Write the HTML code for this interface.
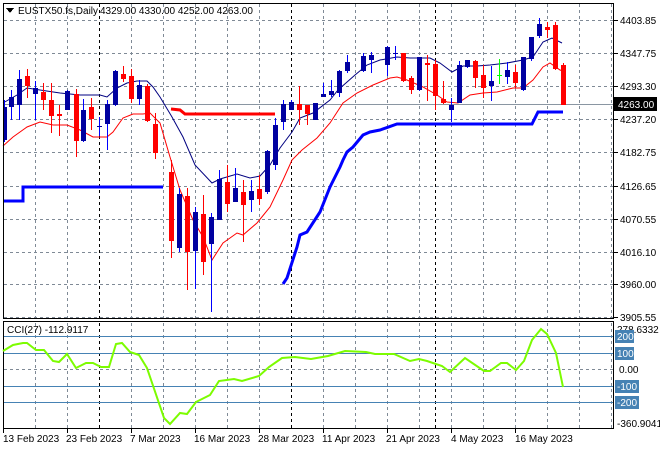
<!DOCTYPE html>
<html><head><meta charset="utf-8"><style>
body{margin:0;background:#fff;width:660px;height:450px;overflow:hidden;font-family:"Liberation Sans",sans-serif;}
svg{position:absolute;left:0;top:0}
text{font-family:"Liberation Sans",sans-serif;font-size:10px;fill:#000}
</style></head><body>
<svg width="660" height="450" viewBox="0 0 660 450" xmlns="http://www.w3.org/2000/svg" shape-rendering="crispEdges">
<rect width="660" height="450" fill="#fff"/>
<g stroke="#7f8a96" stroke-width="1" stroke-dasharray="3,3">
<path d="M4 20.5H613M4 53.5H613M4 86.5H613M4 119.5H613M4 152.5H613M4 186.5H613M4 219.5H613M4 252.5H613M4 284.5H613M4 317.5H613"/>
<path d="M35.5 4V318M67.5 4V318M131.5 4V318M163.5 4V318M195.5 4V318M227.5 4V318M259.5 4V318M323.5 4V318M355.5 4V318M387.5 4V318M419.5 4V318M451.5 4V318M483.5 4V318M515.5 4V318M547.5 4V318M579.5 4V318M611.5 4V318"/>
<path d="M35.5 323V428M67.5 323V428M131.5 323V428M163.5 323V428M195.5 323V428M227.5 323V428M259.5 323V428M323.5 323V428M355.5 323V428M387.5 323V428M419.5 323V428M451.5 323V428M483.5 323V428M515.5 323V428M547.5 323V428M579.5 323V428M611.5 323V428"/>
<path d="M4 369.5H613"/>
</g>
<g stroke="#000" stroke-width="1" stroke-dasharray="3,3">
<path d="M99.5 4V318M291.5 4V318M435.5 4V318M99.5 323V428M291.5 323V428M435.5 323V428"/>
</g>
<path d="M4 104.5H613" stroke="#8a96a2" stroke-width="1"/>
<path d="M171 109L180 110L185 114L275 114" fill="none" stroke="#ff0000" stroke-width="3" shape-rendering="auto"/>
<path d="M3 201H23V187H163" fill="none" stroke="#0000ff" stroke-width="3"/>
<path d="M283 284L287 278L297 247L300 235L307 232L320 212L330 187L340 167L343 160L347 152L353 147L363 135L370 132L380 130L397 124L532 124L538 112L563 112" fill="none" stroke="#0000ff" stroke-width="3" shape-rendering="auto"/>
<path d="M3 103L17 95L27 88L40 90L60 93L80 95L100 95L107 97L117 88L127 83L137 81L147 81L153 87L160 97L172 117L183 137L195 165L212 183L220 179L237 174L250 178L260 176L270 165L280 148L292 132L300 118L313 113L330 100L338 90L355 75L367 65L380 60L397 57L410 58L430 58L440 63L452 72L463 66L477 66L490 65L507 63L523 60L533 57L543 42L552 38L562 43" fill="none" stroke="#000080" stroke-width="1" shape-rendering="auto"/>
<path d="M3 146L13 137L27 127L40 122L53 125L67 125L80 130L93 137L107 137L113 132L123 118L133 114L143 114L150 113L160 123L170 157L180 190L193 220L203 237L212 260L223 243L237 233L243 235L257 223L270 207L283 180L292 160L302 150L317 138L330 123L343 103L357 93L373 85L390 78L397 77L407 80L423 87L437 95L447 102L458 103L470 95L483 93L497 92L513 88L523 88L533 80L543 67L550 63L560 70L563 71" fill="none" stroke="#ff0000" stroke-width="1" shape-rendering="auto"/>
<g stroke-width="1">
<g fill="#0000a0" stroke="#0000ff">
<path d="M4.5 100V142M11.5 90V120M19.5 70V120M35.5 81V120M67.5 90V110M83.5 99V142M99.5 117V136M107.5 100V150M115.5 70V106M139.5 80V105M179.5 188V252M195.5 207V289M211.5 213V312M219.5 170V220M235.5 168V202M251.5 180V212M267.5 150V194M275.5 118V170M283.5 100V130M291.5 100V110M315.5 103V120M323.5 83V97M331.5 80V97M339.5 70V97M347.5 55V73M363.5 53V72M371.5 52V73M387.5 46V76M395.5 46V60M419.5 57V91M451.5 98V122M459.5 61V103M467.5 60V68M491.5 66V101M507.5 62V84M523.5 57V91M531.5 37V61M539.5 18V38"/>
</g>
<g fill="#0000a0" stroke="none">
<rect x="3" y="107" width="4" height="33"/><rect x="9" y="97" width="5" height="10"/><rect x="17" y="79" width="5" height="26"/><rect x="33" y="88" width="5" height="6"/><rect x="65" y="91" width="5" height="19"/><rect x="81" y="110" width="5" height="31"/><rect x="97" y="126" width="5" height="1"/><rect x="105" y="104" width="5" height="20"/><rect x="113" y="71" width="5" height="34"/><rect x="137" y="85" width="5" height="14"/><rect x="177" y="194" width="5" height="54"/><rect x="193" y="212" width="5" height="39"/><rect x="209" y="217" width="5" height="27"/><rect x="217" y="179" width="5" height="41"/><rect x="233" y="188" width="5" height="14"/><rect x="249" y="191" width="5" height="9"/><rect x="265" y="151" width="5" height="41"/><rect x="273" y="125" width="5" height="40"/><rect x="281" y="104" width="5" height="18"/><rect x="289" y="102" width="5" height="8"/><rect x="313" y="103" width="5" height="17"/><rect x="321" y="94" width="5" height="3"/><rect x="329" y="91" width="5" height="4"/><rect x="337" y="71" width="5" height="22"/><rect x="345" y="62" width="5" height="9"/><rect x="361" y="56" width="5" height="15"/><rect x="369" y="55" width="5" height="5"/><rect x="385" y="47" width="5" height="18"/><rect x="393" y="53" width="5" height="1"/><rect x="417" y="57" width="5" height="33"/><rect x="449" y="105" width="5" height="5"/><rect x="457" y="65" width="5" height="38"/><rect x="465" y="60" width="5" height="7"/><rect x="489" y="81" width="5" height="5"/><rect x="505" y="70" width="5" height="7"/><rect x="521" y="57" width="5" height="33"/><rect x="529" y="37" width="5" height="22"/><rect x="537" y="24" width="5" height="12"/>
</g>
<g stroke="#ff0000">
<path d="M27.5 69V98M43.5 83V110M51.5 83V133M59.5 105V136M76.5 89V157M91.5 98V130M123.5 66V82M131.5 69V103M147.5 84V122M155.5 113V159M171.5 160V258M187.5 188V290M203.5 195V275M227.5 165V212M243.5 180V242M259.5 175V205M299.5 86V125M307.5 105V125M403.5 53V82M411.5 76V94M427.5 55V101M435.5 60V110M443.5 81V104M475.5 60V88M483.5 65V98M515.5 65V88M547.5 22V38M555.5 22V70M563.5 63V105"/>
</g>
<g fill="#ff0000">
<rect x="25" y="76" width="5" height="10"/><rect x="41" y="92" width="5" height="8"/><rect x="49" y="100" width="5" height="16"/><rect x="57" y="114" width="5" height="2"/><rect x="74" y="94" width="5" height="47"/><rect x="89" y="107" width="5" height="12"/><rect x="121" y="74" width="5" height="5"/><rect x="129" y="76" width="5" height="23"/><rect x="145" y="86" width="5" height="35"/><rect x="153" y="124" width="5" height="29"/><rect x="169" y="172" width="5" height="69"/><rect x="185" y="196" width="5" height="56"/><rect x="201" y="214" width="5" height="48"/><rect x="225" y="182" width="5" height="22"/><rect x="241" y="192" width="5" height="13"/><rect x="257" y="189" width="5" height="10"/><rect x="297" y="104" width="5" height="6"/><rect x="305" y="105" width="5" height="9"/><rect x="401" y="53" width="5" height="28"/><rect x="409" y="78" width="5" height="12"/><rect x="425" y="63" width="5" height="2"/><rect x="433" y="64" width="5" height="32"/><rect x="441" y="99" width="5" height="4"/><rect x="473" y="61" width="5" height="17"/><rect x="481" y="75" width="5" height="13"/><rect x="513" y="72" width="5" height="11"/><rect x="545" y="27" width="5" height="3"/><rect x="553" y="25" width="5" height="44"/><rect x="561" y="65" width="5" height="40"/>
</g>
<path d="M499.5 59V84M497 75.5H502" stroke="#00ff00"/>
</g>
<rect x="3.5" y="3.5" width="610" height="315" fill="none" stroke="#000"/>
<rect x="3.5" y="321.5" width="610" height="107" fill="none" stroke="#000"/>
<path d="M614 20.5h4M614 53.5h4M614 86.5h4M614 119.5h4M614 152.5h4M614 186.5h4M614 219.5h4M614 252.5h4M614 284.5h4M614 317.5h4" stroke="#000"/>
<path d="M4 336.5H613M4 353.5H613M4 386.5H613M4 402.5H613" stroke="#4682b4" stroke-width="1"/>
<path d="M3 351L13 345L23 343L27 343L36 350L44 350L53 361L59 362L67 354L76 368L86 363L93 363L101 367L109 367L116 344L122 343L130 352L139 355L147 368L164 418L170 424L180 413L187 414L196 402L210 395L219 381L234 379L242 381L259 376L269 367L282 358L295 357L311 359L328 356L345 351L366 352L375 354L394 354L410 361L419 359L427 361L442 366L450 372L465 358L484 371L490 371L501 363L507 363L516 370L524 361L532 340L541 329L547 334L556 353L563 387" fill="none" stroke="#7cfc00" stroke-width="2" shape-rendering="auto"/>
<path d="M6 8h8l-4 5z" fill="#000"/>
<text x="18" y="14">EUSTX50.fs,Daily</text>
<text x="100" y="14">4329.00 4330.00 4252.00 4263.00</text>
<text x="7" y="333">CCI(27) -112.9117</text>
<g>
<text x="620" y="24">4403.85</text><text x="620" y="57">4347.75</text><text x="620" y="90">4293.30</text>
<rect x="614" y="97" width="43" height="14" fill="#000"/><text x="618" y="108" style="fill:#fff">4263.00</text>
<text x="620" y="123">4237.20</text><text x="620" y="156">4182.75</text><text x="620" y="190">4126.65</text><text x="620" y="223">4070.55</text><text x="620" y="256">4016.10</text><text x="620" y="288">3960.00</text><text x="620" y="321">3905.55</text>
<text x="617" y="333">278.6332</text>
<rect x="615" y="330" width="19" height="13" fill="#4682b4"/><text x="617" y="340" style="fill:#fff">200</text>
<rect x="615" y="347" width="19" height="13" fill="#4682b4"/><text x="617" y="357" style="fill:#fff">100</text>
<text x="619" y="373">0.00</text>
<rect x="615" y="380" width="24" height="13" fill="#4682b4"/><text x="617" y="390" style="fill:#fff">-100</text>
<rect x="615" y="396" width="24" height="13" fill="#4682b4"/><text x="617" y="406" style="fill:#fff">-200</text>
<text x="617" y="427">-360.9041</text>
</g>
<path d="M3.5 429v4M67.5 429v4M131.5 429v4M195.5 429v4M259.5 429v4M323.5 429v4M387.5 429v4M451.5 429v4M515.5 429v4" stroke="#000"/>
<text x="3" y="442">13 Feb 2023</text><text x="66" y="442">23 Feb 2023</text><text x="130" y="442">7 Mar 2023</text><text x="194" y="442">16 Mar 2023</text><text x="258" y="442">28 Mar 2023</text><text x="322" y="442">11 Apr 2023</text><text x="386" y="442">21 Apr 2023</text><text x="451" y="442">4 May 2023</text><text x="515" y="442">16 May 2023</text>
</svg>
</body></html>
